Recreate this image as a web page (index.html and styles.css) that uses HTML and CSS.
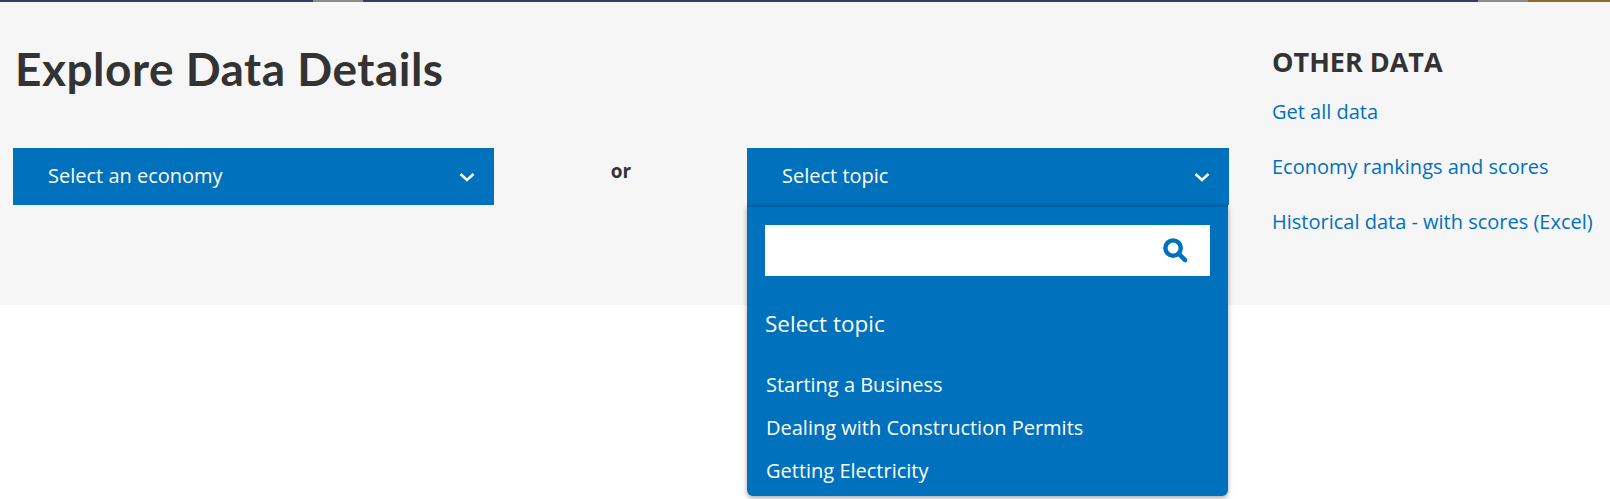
FILE: index.html
```html
<!DOCTYPE html>
<html lang="en">
<head>
  <meta charset="UTF-8">
  <title>Explore Data Details</title>
  <link rel="stylesheet" href="styles.css">
</head>
<body>
  <div class="top-bar">
    <span class="seg dark seg-a"></span>
    <span class="seg gray seg-b"></span>
    <span class="seg dark seg-c"></span>
    <span class="seg gray seg-b"></span>
    <span class="seg gold"></span>
  </div>

  <section class="explore">
    <div class="explore-main">
      <h1>Explore Data Details</h1>
      <div class="selectors">
        <button class="select-btn">
          Select an economy
          <svg class="chevron" viewBox="0 0 16 12"><path d="M1.5 3l6.5 6 6.5-6" /></svg>
        </button>
        <p class="or">or</p>
        <div class="topic-select">
          <button class="select-btn">
            Select topic
            <svg class="chevron" viewBox="0 0 16 12"><path d="M1.5 3l6.5 6 6.5-6" /></svg>
          </button>
          <!-- open dropdown -->
          <div class="topic-menu">
            <div class="search-box">
              <svg class="search-icon" viewBox="0 0 26 26"><circle cx="10.5" cy="10.5" r="8" /><path d="M16.5 16.5l6.5 6.5" /></svg>
            </div>
            <h3>Select topic</h3>
            <ul>
              <li>Starting a Business</li>
              <li>Dealing with Construction Permits</li>
              <li>Getting Electricity</li>
            </ul>
          </div>
        </div>
      </div>
    </div>

    <aside class="other-data">
      <h2>OTHER DATA</h2>
      <a href="#">Get all data</a>
      <a href="#">Economy rankings and scores</a>
      <a href="#">Historical data - with scores (Excel)</a>
    </aside>
  </section>
</body>
</html>
```

FILE: styles.css
```css
* {
  box-sizing: border-box;
}
body {
  margin: 0;
  background: #fff;
  font-family: "Open Sans", "Noto Sans", sans-serif;
  color: #333;
  height: 499px;
  overflow: hidden;
}
.top-bar {
  display: flex;
  height: 2px;
}
.seg.dark {
  background: #363f5a;
}
.seg.gray {
  background: #8c8c8c;
  width: 50px;
}
.seg-a {
  width: 313px;
}
.seg-c {
  width: 1115px;
}
.gold {
  flex: 1;
  background: #8a6d23;
}
.explore {
  display: flex;
  height: 303px;
  background: #f6f6f6;
  padding-left: 13px;
}
.explore-main {
  width: 1216px;
}
h1 {
  margin: 39px 0 0 2px;
  font-family: Lato, sans-serif;
  font-size: 46px;
  line-height: 56px;
  font-weight: 700;
  letter-spacing: 0.5px;
}
.selectors {
  display: grid;
  grid-template-columns: 481px 1fr 482px;
  margin-top: 51px;
}
.select-btn {
  display: flex;
  align-items: center;
  justify-content: space-between;
  width: 100%;
  height: 57px;
  padding: 0 19px 2px 35px;
  border: none;
  background: #0071bc;
  color: #fff;
  font-family: inherit;
  font-size: 20px;
  font-weight: 500;
  line-height: 26px;
}
.chevron {
  width: 16px;
  height: 12px;
  margin-top: 2px;
  fill: none;
  stroke: #fff;
  stroke-width: 2.6;
}
.or {
  margin: 10px 0 0;
  padding-left: 1px;
  text-align: center;
  font-size: 19px;
  font-weight: 700;
  line-height: 26px;
}
.topic-select {
  position: relative;
}
.topic-menu {
  position: absolute;
  top: 57px;
  left: 0;
  width: 481px;
  height: 291px;
  padding: 18px 18px 0;
  background: #0071bc;
  border-top: 2px solid #0061a3;
  border-radius: 0 0 6px 6px;
  box-shadow: 0 2px 5px rgba(0, 0, 0, 0.35);
  color: #fff;
}
.search-box {
  display: flex;
  align-items: center;
  justify-content: flex-end;
  height: 51px;
  padding-right: 22px;
  background: #fff;
}
.search-icon {
  width: 25px;
  height: 25px;
  fill: none;
  stroke: #0071bc;
  stroke-width: 4.6;
  stroke-linecap: round;
}
.topic-menu h3 {
  margin: 33px 0 0;
  font-size: 22.5px;
  line-height: 30px;
  font-weight: 500;
}
.topic-menu ul {
  margin: 32px 0 0 1px;
  padding: 0;
  list-style: none;
}
.topic-menu li {
  height: 43px;
  font-size: 20px;
  font-weight: 500;
  line-height: 28px;
}
.other-data {
  padding: 43px 0 0 43px;
}
.other-data h2 {
  margin: 0 0 19px;
  font-size: 27px;
  line-height: 34px;
  font-weight: 700;
}
.other-data a {
  display: block;
  height: 55px;
  font-size: 20px;
  line-height: 28px;
  color: #0071bc;
  text-decoration: none;
}
```
